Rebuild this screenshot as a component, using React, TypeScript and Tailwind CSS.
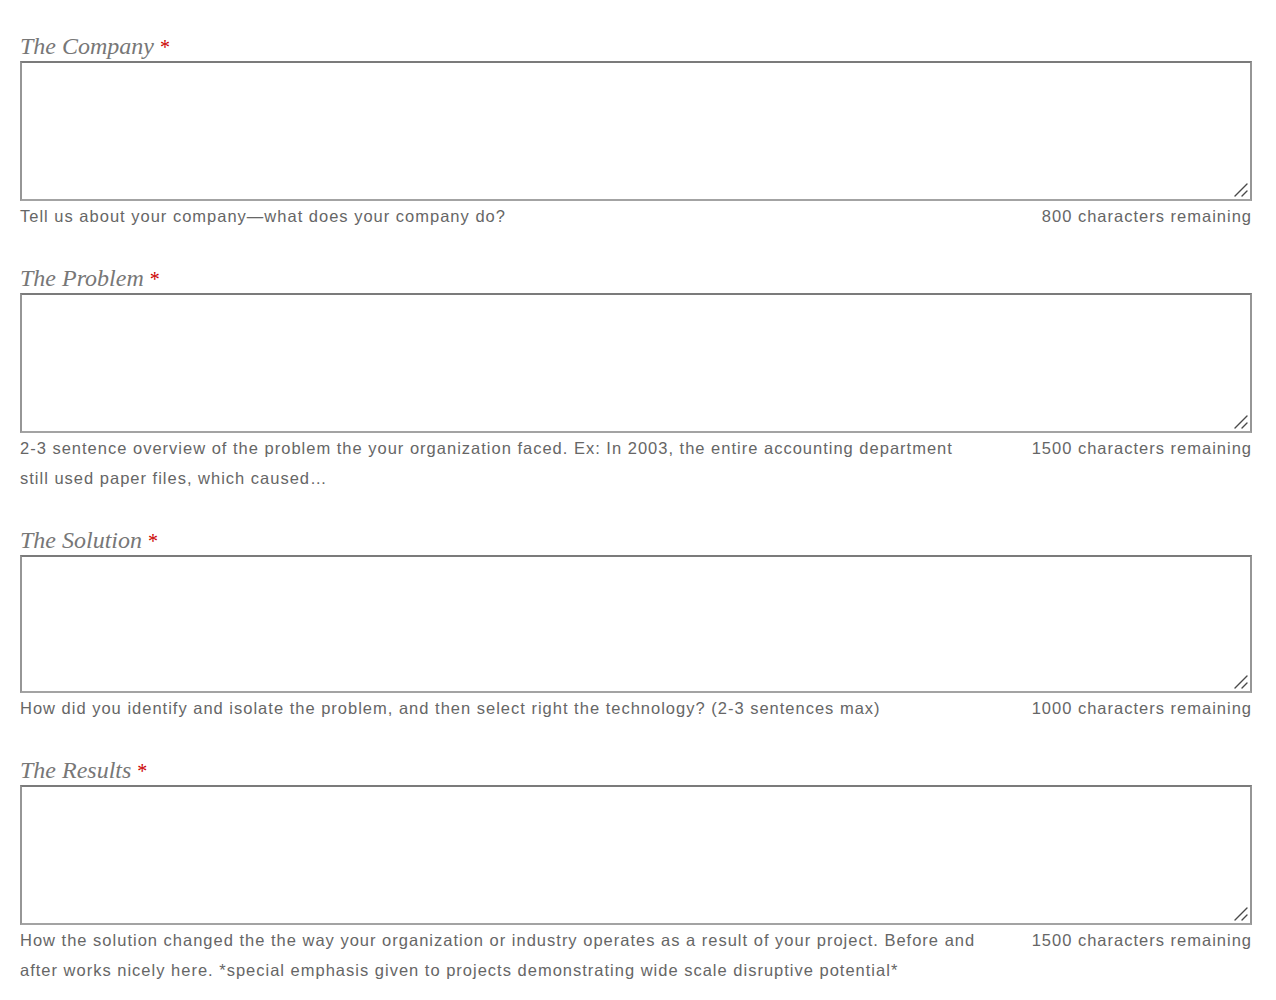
import React from 'react';

type Field = {
  label: string;
  help: string;
  remaining: string;
  height: string;
};

const fields: Field[] = [
  {
    label: 'The Company',
    help: 'Tell us about your company\u2014what does your company do?',
    remaining: '800 characters remaining',
    height: 'h-[140px]',
  },
  {
    label: 'The Problem',
    help: '2-3 sentence overview of the problem the your organization faced. Ex: In 2003, the entire accounting department still used paper files, which caused\u2026',
    remaining: '1500 characters remaining',
    height: 'h-[140px]',
  },
  {
    label: 'The Solution',
    help: 'How did you identify and isolate the problem, and then select right the technology? (2-3 sentences max)',
    remaining: '1000 characters remaining',
    height: 'h-[138px]',
  },
  {
    label: 'The Results',
    help: 'How the solution changed the the way your organization or industry operates as a result of your project. Before and after works nicely here. *special emphasis given to projects demonstrating wide scale disruptive potential*',
    remaining: '1500 characters remaining',
    height: 'h-[140px]',
  },
];

function ResizeGrip() {
  return (
    <svg
      className="absolute right-[3px] bottom-[3px] pointer-events-none"
      width="16"
      height="16"
      viewBox="0 0 16 16"
    >
      <path d="M2 14 L14 2 M9 14 L14 9" stroke="#4a4a4a" strokeWidth="1.4" strokeLinecap="round" />
    </svg>
  );
}

function TextField({ field }: { field: Field }) {
  return (
    <div className="mt-[32px] first:mt-0">
      <label className="block h-[30px] leading-[30px] font-['Liberation_Serif',Georgia,serif] italic text-[24px] text-[#777]">
        {field.label} <span className="not-italic text-[#c00] text-[20px]">*</span>
      </label>
      <div className="relative">
        <textarea
          className={`block w-full ${field.height} resize-none border-2 border-solid border-t-[#7b7b7b] border-l-[#969696] border-r-[#969696] border-b-[#a3a3a3] bg-white outline-none`}
        />
        <ResizeGrip />
      </div>
      <div className="flex justify-between font-['Liberation_Sans',Arial,sans-serif] text-[16.5px] leading-[30px] text-[#666] tracking-[1px]">
        <p className="w-[961px]">{field.help}</p>
        <p className="text-right whitespace-nowrap">{field.remaining}</p>
      </div>
    </div>
  );
}

export default function App() {
  return (
    <div className="min-h-screen bg-white pl-[20px] pr-[24px] pt-[31px]">
      {fields.map((f) => (
        <TextField key={f.label} field={f} />
      ))}
    </div>
  );
}
